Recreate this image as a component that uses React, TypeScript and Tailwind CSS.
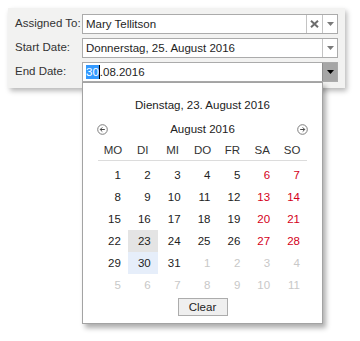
import React from 'react';

type Day = { n: number; kind: 'cur' | 'other'; weekend?: boolean };

function buildWeeks(): Day[][] {
  const days: Day[] = [];
  for (let i = 1; i <= 31; i++) days.push({ n: i, kind: 'cur' });
  for (let i = 1; i <= 11; i++) days.push({ n: i, kind: 'other' });
  const weeks: Day[][] = [];
  for (let w = 0; w < 6; w++) {
    weeks.push(
      days.slice(w * 7, w * 7 + 7).map((d, i) => ({ ...d, weekend: i >= 5 }))
    );
  }
  return weeks;
}

function DropArrow({ dark }: { dark?: boolean }) {
  return (
    <svg width="7" height="4" viewBox="0 0 7 4">
      <path d="M0 0h7L3.5 4z" fill={dark ? '#000' : '#7a7a7a'} />
    </svg>
  );
}

function NavArrow({ dir }: { dir: 'left' | 'right' }) {
  return (
    <svg width="11" height="11" viewBox="0 0 11 11">
      <circle cx="5.5" cy="5.5" r="4.8" fill="#fff" stroke="#7d7d7d" strokeWidth="1" />
      {dir === 'left' ? (
        <path d="M7.8 5.5H3.4M5.3 3.4L3.2 5.5l2.1 2.1" fill="none" stroke="#444" strokeWidth="1" />
      ) : (
        <path d="M3.2 5.5h4.4M5.7 3.4l2.1 2.1-2.1 2.1" fill="none" stroke="#444" strokeWidth="1" />
      )}
    </svg>
  );
}

function Calendar() {
  const heads = ['MO', 'DI', 'MI', 'DO', 'FR', 'SA', 'SO'];
  const weeks = buildWeeks();
  return (
    <div className="absolute left-[-1px] top-[19px] z-10 w-[241px] h-[242px] bg-white border border-[#a3a3a3] shadow-[3px_4px_5px_rgba(0,0,0,0.32)] pt-[14px] text-[#222]">
      <div className="h-[16px] leading-[16px] text-center text-[11.5px]">Dienstag, 23. August 2016</div>
      <div className="mt-[8px] h-[16px] px-[14px] flex items-center justify-between">
        <NavArrow dir="left" />
        <span className="text-[11.5px] leading-[16px]">August 2016</span>
        <NavArrow dir="right" />
      </div>
      <div className="mt-[5px] mx-[15px] h-[19px] flex border-b border-[#dcdcdc]">
        {heads.map((h) => (
          <div key={h} className="w-[30px] text-center leading-[16px] text-[11.5px] text-[#333]">
            {h}
          </div>
        ))}
      </div>
      <div className="mt-[3px] mx-[15px] flex flex-col">
        {weeks.map((w, wi) => (
          <div key={wi} className="flex h-[22px]">
            {w.map((d, di) => {
              const sel = d.kind === 'cur' && d.n === 23;
              const today = d.kind === 'cur' && d.n === 30;
              const color =
                d.kind === 'other'
                  ? 'text-[#c8c8c8]'
                  : d.weekend
                  ? 'text-[#d4001a]'
                  : 'text-[#222]';
              const bg = sel ? 'bg-[#e4e4e4]' : today ? 'bg-[#e6eefa]' : '';
              return (
                <div
                  key={di}
                  className={`w-[30px] h-[22px] leading-[22px] text-right pr-[7px] text-[11.5px] ${color} ${bg}`}
                >
                  {d.n}
                </div>
              );
            })}
          </div>
        ))}
      </div>
      <div className="mt-[2px] flex justify-center">
        <div className="w-[50px] h-[18px] border border-[#acacac] bg-[#efefef] text-center leading-[16px] text-[11.5px] text-[#222]">
          Clear
        </div>
      </div>
    </div>
  );
}

export default function App() {
  return (
    <div className="w-[360px] h-[341px] bg-white pt-[8px] pl-[8px] font-['Liberation_Sans',Arial,sans-serif] text-[11.5px] overflow-hidden">
      <div className="relative w-[337px] h-[80px] bg-[#f2f2f1] shadow-[2px_3px_5px_rgba(0,0,0,0.28)] pt-[6px] pl-[7px] flex flex-col gap-[4px]">
        <div className="flex items-center h-[20px]">
          <div className="w-[67px] text-[#333]">Assigned To:</div>
          <div className="w-[256px] h-[20px] bg-white border border-[#ababab] flex">
            <div className="flex-1 pl-[3px] leading-[18px] text-[#1e1e1e]">Mary Tellitson</div>
            <div className="w-[16px] border-l border-[#c4c4c4] flex items-center justify-center">
              <svg width="9" height="8" viewBox="0 0 9 8">
                <path d="M1 0.8l7 6.4M8 0.8l-7 6.4" stroke="#6d6d6d" strokeWidth="2" />
              </svg>
            </div>
            <div className="w-[15px] border-l border-[#c4c4c4] flex items-center justify-center">
              <DropArrow />
            </div>
          </div>
        </div>
        <div className="flex items-center h-[20px]">
          <div className="w-[67px] text-[#333]">Start Date:</div>
          <div className="w-[256px] h-[20px] bg-white border border-[#ababab] flex">
            <div className="flex-1 pl-[3px] leading-[18px] text-[#1e1e1e]">Donnerstag, 25. August 2016</div>
            <div className="w-[15px] border-l border-[#c4c4c4] flex items-center justify-center">
              <DropArrow />
            </div>
          </div>
        </div>
        <div className="flex items-center h-[20px]">
          <div className="w-[67px] text-[#333]">End Date:</div>
          <div className="relative w-[256px] h-[20px] bg-white border border-[#ababab] flex">
            <div className="flex-1 pl-[3px] leading-[18px] text-[#1e1e1e] flex items-center">
              <span className="bg-[#3399ff] text-white leading-[14px]">30</span>
              <span className="w-px h-[14px] bg-black" />
              <span>.08.2016</span>
            </div>
            <div className="w-[15px] border-l border-[#8e8e8e] bg-[#a6a6a6] flex items-center justify-center">
              <DropArrow dark />
            </div>
            <Calendar />
          </div>
        </div>
      </div>
    </div>
  );
}
